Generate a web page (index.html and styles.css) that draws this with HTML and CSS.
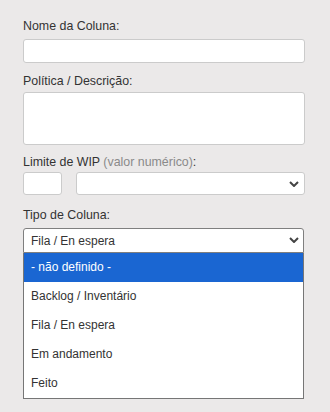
FILE: index.html
```html
<!DOCTYPE html>
<html>
<head>
    <meta charset="utf-8">
    <link rel="stylesheet" href="styles.css">
</head>
<body>
    <form class="column-form">
        <div class="group group-name">
            <label class="label" for="col-name">Nome da Coluna:</label>
            <input type="text" id="col-name" class="field">
        </div>

        <div class="group group-policy">
            <label class="label" for="col-policy">Política / Descrição:</label>
            <textarea id="col-policy" class="field field-area"></textarea>
        </div>

        <div class="group group-wip">
            <label class="label" for="col-wip">Limite de WIP <span class="hint">(valor numérico)</span>:</label>
            <div class="wip-row">
                <input type="text" id="col-wip" class="field field-wip">
                <div class="select-wrap select-unit">
                    <select class="field field-select">
                        <option></option>
                    </select>
                    <svg class="chevron" width="10" height="6" viewBox="0 0 10 6"><polyline points="1,1 5,5 9,1" fill="none" stroke="#444" stroke-width="2"/></svg>
                </div>
            </div>
        </div>

        <div class="group group-type">
            <label class="label" for="col-type">Tipo de Coluna:</label>
            <div class="select-wrap select-type">
                <select id="col-type" class="field field-select is-open">
                    <option>Fila / En espera</option>
                </select>
                <svg class="chevron" width="10" height="6" viewBox="0 0 10 6"><polyline points="1,1 5,5 9,1" fill="none" stroke="#444" stroke-width="2"/></svg>

                <!-- lista aberta do select -->
                <ul class="dropdown">
                    <li class="option selected">- não definido -</li>
                    <li class="option">Backlog / Inventário</li>
                    <li class="option">Fila / En espera</li>
                    <li class="option">Em andamento</li>
                    <li class="option">Feito</li>
                </ul>
            </div>
        </div>
    </form>
</body>
</html>
```

FILE: styles.css
```css
body {
    margin: 0;
    padding: 0;
    height: 412px;
    overflow: hidden;
    background: #ebe9e9;
    font-family: "Liberation Sans", Arial, sans-serif;
    font-size: 12px;
    line-height: 14px;
    color: #333;
}

.column-form {
    width: 282px;
    padding: 19px 0 0 23px;
    display: flex;
    flex-direction: column;
}

.label {
    display: block;
    height: 14px;
    font-size: 12.4px;
}

.hint {
    color: #8a8a8a;
}

.field {
    box-sizing: border-box;
    display: block;
    width: 282px;
    height: 24px;
    margin: 0;
    padding: 0 7px;
    border: 1px solid #cbcbcb;
    border-radius: 3px;
    background: #fff;
    font: inherit;
    color: #333;
    outline: none;
}

.group-name {
    margin-bottom: 11px;
}

.group-name .label {
    margin-bottom: 6px;
}

.group-policy {
    margin-bottom: 10px;
}

.group-policy .label {
    margin-bottom: 4px;
}

.field-area {
    height: 53px;
    resize: none;
}

.group-wip {
    margin-bottom: 13px;
}

.group-wip .label {
    margin-bottom: 3px;
}

.wip-row {
    display: flex;
    gap: 14px;
}

.field-wip {
    width: 39px;
    height: 23px;
}

.select-wrap {
    position: relative;
}

.select-unit {
    flex: 1;
}

.select-unit .field-select {
    width: 100%;
    height: 23px;
}

.field-select {
    appearance: none;
    -webkit-appearance: none;
}

.chevron {
    position: absolute;
    right: 6px;
    top: 50%;
    margin-top: -3px;
    pointer-events: none;
}

.group-type .label {
    margin-bottom: 6px;
}

.select-type {
    width: 281px;
}

.select-type .field-select {
    width: 281px;
    height: 25px;
    border-color: #7f7f7f;
    border-radius: 3px 3px 0 0;
}

.select-type > .chevron {
    top: 12px;
    right: 5px;
}

.dropdown {
    position: absolute;
    top: 25px;
    left: 0;
    width: 281px;
    box-sizing: border-box;
    margin: 0;
    padding: 0;
    list-style: none;
    background: #fff;
    border: 1px solid #767676;
    border-top: none;
}

.option {
    height: 29px;
    line-height: 29px;
    padding-left: 7px;
    color: #333;
}

.option.selected {
    background: #1a66d2;
    color: #fff;
}
```
